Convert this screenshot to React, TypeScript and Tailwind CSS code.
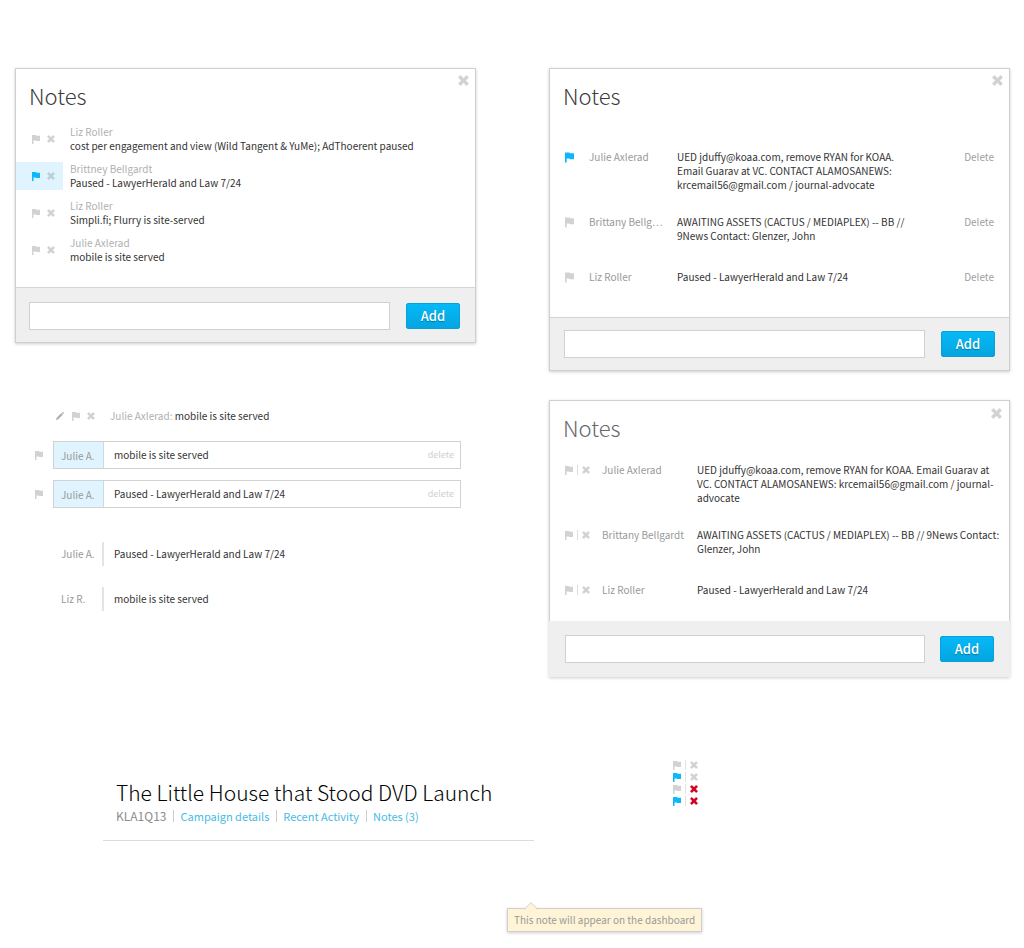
import type { ReactNode } from 'react';

type IconProps = { className?: string };

function Flag({ className = '' }: IconProps) {
  return (
    <svg viewBox="0 0 16 18" fill="currentColor" className={`shrink-0 ${className}`} aria-hidden="true">
      <path d="M0 0h8l1 1.500h7V12H8.500l-1-1.200H3V18H0z" />
    </svg>
  );
}

function Cross({ className = '' }: IconProps) {
  return (
    <svg viewBox="0 0 16 16" fill="currentColor" className={`shrink-0 ${className}`} aria-hidden="true">
      <path d="M3.600.4 8 4.700 12.400.4 15.600 3.600 11.300 8l4.300 4.400-3.200 3.200L8 11.300l-4.400 4.300L.4 12.400 4.700 8 .4 3.600z" stroke="currentColor" strokeWidth=".6" strokeLinejoin="round" />
    </svg>
  );
}

function Pencil({ className = '' }: IconProps) {
  return (
    <svg viewBox="0 0 16 16" fill="currentColor" className={`shrink-0 ${className}`} aria-hidden="true">
      <path d="M0 16l1-4.200L10.800 2l3.200 3.200L4.200 15zM11.800 1l1-1c.5-.3 1-.2 1.400.2l1.600 1.600c.3.400.3.900 0 1.300l-1 1.100z" />
    </svg>
  );
}

function FlagButton({ active = false, large = false }: { active?: boolean; large?: boolean }) {
  return (
    <button type="button" aria-label="Flag note" className={active ? 'text-[#0db8fa]' : 'text-[#d2d2d2]'}>
      <Flag className={large ? 'h-[11px] w-[9px]' : 'h-[9px] w-[8px]'} />
    </button>
  );
}

function RemoveButton({ tone = 'text-[#d2d2d2]' }: { tone?: string }) {
  return (
    <button type="button" aria-label="Remove note" className={tone}>
      <Cross className="size-[8px]" />
    </button>
  );
}

function Panel({
  children,
  label,
  light = false,
  flush = false,
  footerClass,
}: {
  children: ReactNode;
  label: string;
  light?: boolean;
  flush?: boolean;
  footerClass: string;
}) {
  return (
    <section
      aria-label={label}
      className={`relative bg-white shadow-[0_1px_3px_rgba(0,0,0,0.2)] ${flush ? '' : 'border border-[#cfcfcf]'}`}
    >
      <button
        type="button"
        aria-label="Close"
        className={`absolute text-[#d2d2d2] ${flush ? 'top-[8px] right-[8px]' : 'top-[6px] right-[6px]'}`}
      >
        <Cross className="size-[11px]" />
      </button>
      <div className={flush ? 'border border-b-0 border-[#cfcfcf]' : ''}>
        <h2 className={`px-[13px] pt-[12px] text-[22px] leading-[28px] font-light ${light ? 'text-[#666]' : 'text-[#3c3c3c]'}`}>
          Notes
        </h2>
        {children}
      </div>
      <form onSubmit={(e) => e.preventDefault()} className={`flex items-center bg-[#efefef] ${footerClass}`}>
        <input
          type="text"
          aria-label="New note"
          className="h-[28px] min-w-0 flex-1 border border-[#d0d0d0] bg-white px-2 text-[10px] outline-none"
        />
        <button
          type="submit"
          className="h-[26px] w-[54px] rounded-[2px] border border-[#0a9fd8] bg-linear-to-b from-[#05b9f7] to-[#04a5e0] text-[13px] leading-[24px] font-medium text-white [text-shadow:0_1px_1px_rgba(0,0,0,0.3)]"
        >
          Add
        </button>
      </form>
    </section>
  );
}

const stacked = [
  { name: 'Liz Roller', text: 'cost per engagement and view (Wild Tangent & YuMe); AdThoerent paused' },
  { name: 'Brittney Bellgardt', text: 'Paused - LawyerHerald and Law 7/24', active: true },
  { name: 'Liz Roller', text: 'Simpli.fi; Flurry is site-served' },
  { name: 'Julie Axlerad', text: 'mobile is site served' },
];

const detailed = [
  {
    name: 'Julie Axlerad',
    shortName: 'Julie Axlerad',
    text: 'UED jduffy@koaa.com, remove RYAN for KOAA. Email Guarav at VC. CONTACT ALAMOSANEWS: krcemail56@gmail.com / journal-advocate',
    active: true,
  },
  {
    name: 'Brittany Bellgardt',
    shortName: 'Brittany Bellg…',
    text: 'AWAITING ASSETS (CACTUS / MEDIAPLEX) -- BB // 9News Contact: Glenzer, John',
  },
  { name: 'Liz Roller', shortName: 'Liz Roller', text: 'Paused - LawyerHerald and Law 7/24' },
];

const boxed = ['mobile is site served', 'Paused - LawyerHerald and Law 7/24'];

const ruled = [
  { name: 'Julie A.', text: 'Paused - LawyerHerald and Law 7/24' },
  { name: 'Liz R.', text: 'mobile is site served' },
];

const states = [
  { active: false, danger: false },
  { active: true, danger: false },
  { active: false, danger: true },
  { active: true, danger: true },
];

function Divider() {
  return <span className="mr-[6px] ml-[7px] h-[12px] w-px bg-[#ccc]" />;
}

export default function App() {
  return (
    <main className="bg-white pt-[68px] pb-4 font-['Noto_Sans_CJK_KR','Noto_Sans',sans-serif] text-[10px] leading-[14px] text-[#333]">
      <div className="grid grid-cols-2 gap-[73px] pr-[14px] pl-[15px]">
        <div>
          <Panel label="Stacked notes" footerClass="gap-4 border-t border-[#d4d4d4] pt-[14px] pr-[15px] pb-[12px] pl-[13px]">
            <ul className="flex flex-col gap-[9px] pt-[16px] pb-[23px]">
              {stacked.map((n, i) => (
                <li key={i} className="flex">
                  <div className={`flex w-[47px] shrink-0 items-center gap-[7px] pl-[16px] ${n.active ? 'bg-[#e0f4ff]' : ''}`}>
                    <FlagButton active={n.active} />
                    <RemoveButton tone={n.active ? 'text-[#bccfd9]' : 'text-[#d2d2d2]'} />
                  </div>
                  <div className="pl-[7px]">
                    <p className="text-[#b0b0b0]">{n.name}</p>
                    <p>{n.text}</p>
                  </div>
                </li>
              ))}
            </ul>
          </Panel>

          <div className="mt-[66px] flex items-center pl-[41px]">
            <button type="button" aria-label="Edit note" className="text-[#b0b0b0]">
              <Pencil className="size-[8px]" />
            </button>
            <div className="flex items-center gap-[7px] pl-[8px]">
              <FlagButton />
              <RemoveButton />
            </div>
            <p className="pl-[15px]">
              <span className="text-[#b0b0b0]">Julie Axlerad:</span> <span>mobile is site served</span>
            </p>
          </div>

          <ul className="mt-[18px] flex flex-col gap-[11px] pr-[15px] pl-[20px]">
            {boxed.map((text) => (
              <li key={text} className="flex items-center gap-[10px]">
                <FlagButton />
                <div className="flex h-[28px] flex-1 items-stretch border border-[#d2d2d2]">
                  <span className="w-[50px] border-r border-[#ccdbe3] bg-[#e0f4ff] pl-[7px] leading-[27px] text-[#999]">
                    Julie A.
                  </span>
                  <span className="flex-1 pl-[10px] leading-[26px]">{text}</span>
                  <button type="button" className="pr-[6px] text-[9px] text-[#cfcfcf]">
                    delete
                  </button>
                </div>
              </li>
            ))}
          </ul>

          <ul className="mt-[34px] flex flex-col gap-[21px] pl-[46px]">
            {ruled.map((n) => (
              <li key={n.name} className="flex h-[24px] items-stretch leading-[24px]">
                <span className="w-[43px] border-r-2 border-[#e4e4e4] text-[#999]">{n.name}</span>
                <span className="pl-[10px]">{n.text}</span>
              </li>
            ))}
          </ul>
        </div>

        <div className="flex flex-col gap-[29px]">
          <Panel label="Notes with delete" footerClass="gap-4 border-t border-[#d4d4d4] px-[14px] py-[12px]">
            <ul className="pt-[41px] pr-[15px] pb-[10px] pl-[15px]">
              {detailed.map((n) => (
                <li key={n.name} className="flex min-h-[55px] items-start pb-[23px] last:min-h-0">
                  <span className="flex h-[14px] w-[24px] shrink-0 items-center">
                    <FlagButton active={n.active} large />
                  </span>
                  <span className="w-[88px] shrink-0 text-[#999]" title={n.name}>
                    {n.shortName}
                  </span>
                  <p className="min-w-0 flex-1 pr-[50px]">{n.text}</p>
                  <button type="button" className="text-[#a0a0a0]">
                    Delete
                  </button>
                </li>
              ))}
            </ul>
          </Panel>

          <Panel label="Notes with actions" light flush footerClass="gap-[15px] px-[16px] py-[14px]">
            <ul className="pt-[22px] pr-[7px] pb-[1px] pl-[15px]">
              {detailed.map((n) => (
                <li key={n.name} className="flex min-h-[55px] items-start pb-[23px] last:min-h-0">
                  <span className="flex h-[14px] w-[37px] shrink-0 items-center">
                    <FlagButton />
                    <span className="mr-[4px] ml-[4px] h-[10px] w-px bg-[#dedede]" />
                    <RemoveButton />
                  </span>
                  <span className="w-[95px] shrink-0 text-[#999]">{n.name}</span>
                  <p className="min-w-0 flex-1">{n.text}</p>
                </li>
              ))}
            </ul>
          </Panel>
        </div>
      </div>

      <div className="mt-[82px] flex items-start pl-[103px]">
        <header className="w-[431px] border-b border-[#dcdcdc] pt-[19px] pb-[16px] pl-[13px]">
          <h1 className="text-[21px] leading-[28px] font-light text-black">The Little House that Stood DVD Launch</h1>
          <nav className="mt-[2px] flex items-center text-[11px] leading-[16px] text-[#45bbe4]">
            <span className="text-[12px] text-[#8c8c8c]">KLA1Q13</span>
            <Divider />
            <a href="#details">Campaign details</a>
            <Divider />
            <a href="#activity">Recent Activity</a>
            <Divider />
            <a href="#notes">Notes (3)</a>
          </nav>
        </header>
        <ul className="ml-[139px]">
          {states.map((s, i) => (
            <li key={i} className="flex h-[12px] items-center">
              <FlagButton active={s.active} />
              <span className="mx-[4px] h-[10px] w-px bg-[#e2e2e2]" />
              <RemoveButton tone={s.danger ? 'text-[#d0021b]' : 'text-[#d2d2d2]'} />
            </li>
          ))}
        </ul>
      </div>

      <div className="mt-[67px] pl-[507px]">
        <div
          role="tooltip"
          className="relative w-fit border border-[#cfcfcf] bg-[#fff5d6] px-[6px] py-[4px] text-[#999] shadow-[0_1px_3px_rgba(0,0,0,0.2)]"
        >
          <svg viewBox="0 0 14 8" className="absolute -top-[7px] left-[16px] h-[8px] w-[14px]" aria-hidden="true">
            <path d="M0 8 7 .7 14 8z" fill="#fff5d6" />
            <path d="M0 7.500 7 .7l7 6.800" fill="none" stroke="#cfcfcf" />
          </svg>
          This note will appear on the dashboard
        </div>
      </div>
    </main>
  );
}
